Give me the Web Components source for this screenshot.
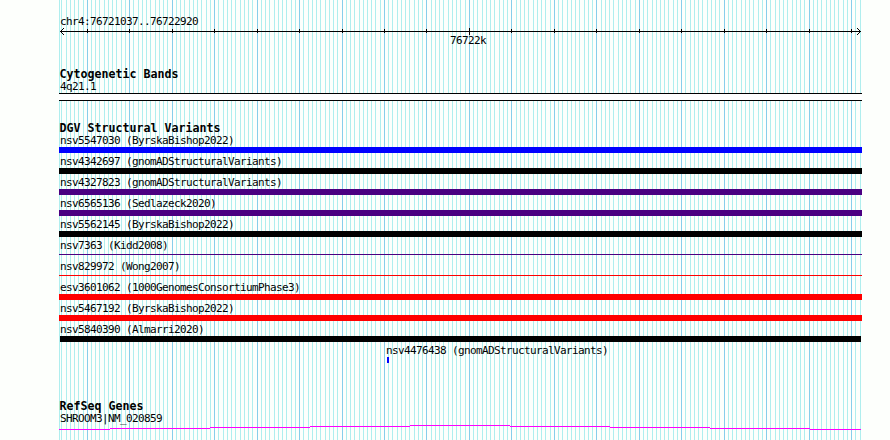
<!DOCTYPE html>
<html lang="en">
<head>
<meta charset="utf-8">
<title>chr4:76721037..76722920</title>
<style>
  body {
    margin: 0;
    background: #fdfffc;
  }
</style>
</head>
<body>
<genome-browser start="76721037" end="76722920">
  <genome-ruler></genome-ruler>
  <track-group label="Cytogenetic Bands" style="margin-top: 21px">
    <cyto-band label="4q21.1"></cyto-band>
  </track-group>
  <track-group label="DGV Structural Variants" style="margin-top: 21px">
    <variant-row label="nsv5547030 (ByrskaBishop2022)" color="#0000ff"></variant-row>
    <variant-row label="nsv4342697 (gnomADStructuralVariants)" color="#000000"></variant-row>
    <variant-row label="nsv4327823 (gnomADStructuralVariants)" color="#4b0082"></variant-row>
    <variant-row label="nsv6565136 (Sedlazeck2020)" color="#4b0082"></variant-row>
    <variant-row label="nsv5562145 (ByrskaBishop2022)" color="#000000"></variant-row>
    <variant-row label="nsv7363 (Kidd2008)" color="#4b0082" thin></variant-row>
    <variant-row label="nsv829972 (Wong2007)" color="#ff0000" thin></variant-row>
    <variant-row label="esv3601062 (1000GenomesConsortiumPhase3)" color="#ff0000"></variant-row>
    <variant-row label="nsv5467192 (ByrskaBishop2022)" color="#ff0000"></variant-row>
    <variant-row label="nsv5840390 (Almarri2020)" color="#000000" style="--from: 1px; --to: 1px"></variant-row>
    <variant-row label="nsv4476438 (gnomADStructuralVariants)" color="#0000ff" style="padding-left: 326px; --from: 2px; --width: 2px"></variant-row>
  </track-group>
  <track-group label="RefSeq Genes" style="margin-top: 35px">
    <gene-row label="SHROOM3|NM_020859"></gene-row>
  </track-group>
</genome-browser>

<script>
class GenomeBrowser extends HTMLElement {
  css = `
    :host {
      display: block;
      position: relative;
      width: 890px;
      height: 440px;
      overflow: hidden;
      color: #000;
      font: 11px/14px "DejaVu Sans Mono", monospace;
      letter-spacing: -0.622px;
      white-space: nowrap;
    }

    .grid {
      position: absolute;
      inset: 0;
    }

    .tracks {
      position: relative;
      width: 803px;
      padding: 15px 0 0 59px;
    }
  `;

  constructor() {
    super();
    this.attachShadow({ mode: "open" });
    this.render();
  }

  // one line per 10 bases, a darker one per 100
  lines() {
    const start = Number(this.getAttribute("start"));
    const end = Number(this.getAttribute("end"));
    const scale = 800 / (end - start + 1);
    let minor = "M59 0h1v440h-1z";
    let major = "";
    for (let pos = Math.ceil(start / 10) * 10; pos <= end; pos += 10) {
      const x = Math.round(60 + (pos - start) * scale);
      if (pos % 100 === 0) {
        major += `M${x} 0h1v440h-1z`;
      } else {
        minor += `M${x} 0h1v440h-1z`;
      }
    }
    return `<path fill="#afeeee" d="${minor}"/><path fill="#87ceeb" d="${major}"/>`;
  }

  render() {
    this.shadowRoot.innerHTML = `
      <style>${this.css}</style>
      <svg class="grid" width="890" height="440" shape-rendering="crispEdges">${this.lines()}</svg>
      <div class="tracks"><slot></slot></div>
    `;
  }
}

class GenomeRuler extends HTMLElement {
  css = `
    :host { display: block; height: 32px; }
    .range { height: 12px; padding-left: 1px; }
    svg { display: block; }
    .mark { margin-top: -2px; padding-left: 391px; }
  `;

  constructor() {
    super();
    this.attachShadow({ mode: "open" });
    this.render();
  }

  ticks() {
    let d = "";
    for (let pos = 76721100; pos <= 76722900; pos += 100) {
      const x = Math.round(1 + (pos - 76721037) * 800 / 1884);
      d += pos % 1000 === 0 ? `M${x} 1h1v7h-1z` : `M${x} 2h1v4h-1z`;
    }
    return d;
  }

  render() {
    this.shadowRoot.innerHTML = `
      <style>${this.css}</style>
      <div class="range">chr4:76721037..76722920</div>
      <svg width="803" height="9" shape-rendering="crispEdges">
        <path d="M1 4h801v1h-801z${this.ticks()}"/>
        <path d="M1 4h1v1h-1zM2 3h1v3h-1zM3 2h1v1h-1zM3 6h1v1h-1zM4 1h1v1h-1zM4 7h1v1h-1z"/>
        <path d="M801 4h1v1h-1zM800 3h1v3h-1zM799 2h1v1h-1zM799 6h1v1h-1zM798 1h1v1h-1zM798 7h1v1h-1z"/>
      </svg>
      <div class="mark">76722k</div>
    `;
  }
}

class TrackGroup extends HTMLElement {
  css = `
    :host { display: block; }
    .title {
      height: 12px;
      padding-left: 0.5px;
      font-size: 11.63px;
      font-weight: bold;
      line-height: 12px;
      letter-spacing: 0;
    }
  `;

  constructor() {
    super();
    this.attachShadow({ mode: "open" });
    this.shadowRoot.innerHTML = `
      <style>${this.css}</style>
      <div class="title">${this.getAttribute("label")}</div>
      <slot></slot>
    `;
  }
}

class CytoBand extends HTMLElement {
  css = `
    :host { display: block; }
    .label { height: 12px; padding-left: 1px; }
    .band {
      height: 6px;
      margin-top: 1px;
      border: solid #000;
      border-width: 1px 0;
      background: #fff;
    }
  `;

  constructor() {
    super();
    this.attachShadow({ mode: "open" });
    this.shadowRoot.innerHTML = `
      <style>${this.css}</style>
      <div class="label">${this.getAttribute("label")}</div>
      <div class="band"></div>
    `;
  }
}

class VariantRow extends HTMLElement {
  css = `
    :host { display: block; height: 21px; }
    .label { height: 13px; padding-left: 1px; }
    .bar {
      width: var(--width, auto);
      height: 6px;
      margin: 0 var(--to, 0) 0 var(--from, 0);
      background: var(--color);
    }
    :host([thin]) .bar { height: 1px; margin-top: 2px; }
  `;

  constructor() {
    super();
    this.attachShadow({ mode: "open" });
    this.style.setProperty("--color", this.getAttribute("color"));
    this.shadowRoot.innerHTML = `
      <style>${this.css}</style>
      <div class="label">${this.getAttribute("label")}</div>
      <div class="bar"></div>
    `;
  }
}

class GeneRow extends HTMLElement {
  css = `
    :host { display: block; }
    .label { height: 12px; padding-left: 1px; }
    svg { display: block; }
  `;

  constructor() {
    super();
    this.attachShadow({ mode: "open" });
    this.shadowRoot.innerHTML = `
      <style>${this.css}</style>
      <div class="label">${this.getAttribute("label")}</div>
      <svg width="803" height="8" shape-rendering="crispEdges">
        <path fill="#ff00ff" d="M0 5h51v1h-51zM51 4h100v1h-100zM151 3h100v1h-100zM251 2h100v1h-100zM351 1h100v1h-100zM451 2h100v1h-100zM551 3h100v1h-100zM651 4h100v1h-100zM751 5h51v1h-51z"/>
      </svg>
    `;
  }
}

customElements.define("genome-browser", GenomeBrowser);
customElements.define("genome-ruler", GenomeRuler);
customElements.define("track-group", TrackGroup);
customElements.define("cyto-band", CytoBand);
customElements.define("variant-row", VariantRow);
customElements.define("gene-row", GeneRow);
</script>
</body>
</html>
